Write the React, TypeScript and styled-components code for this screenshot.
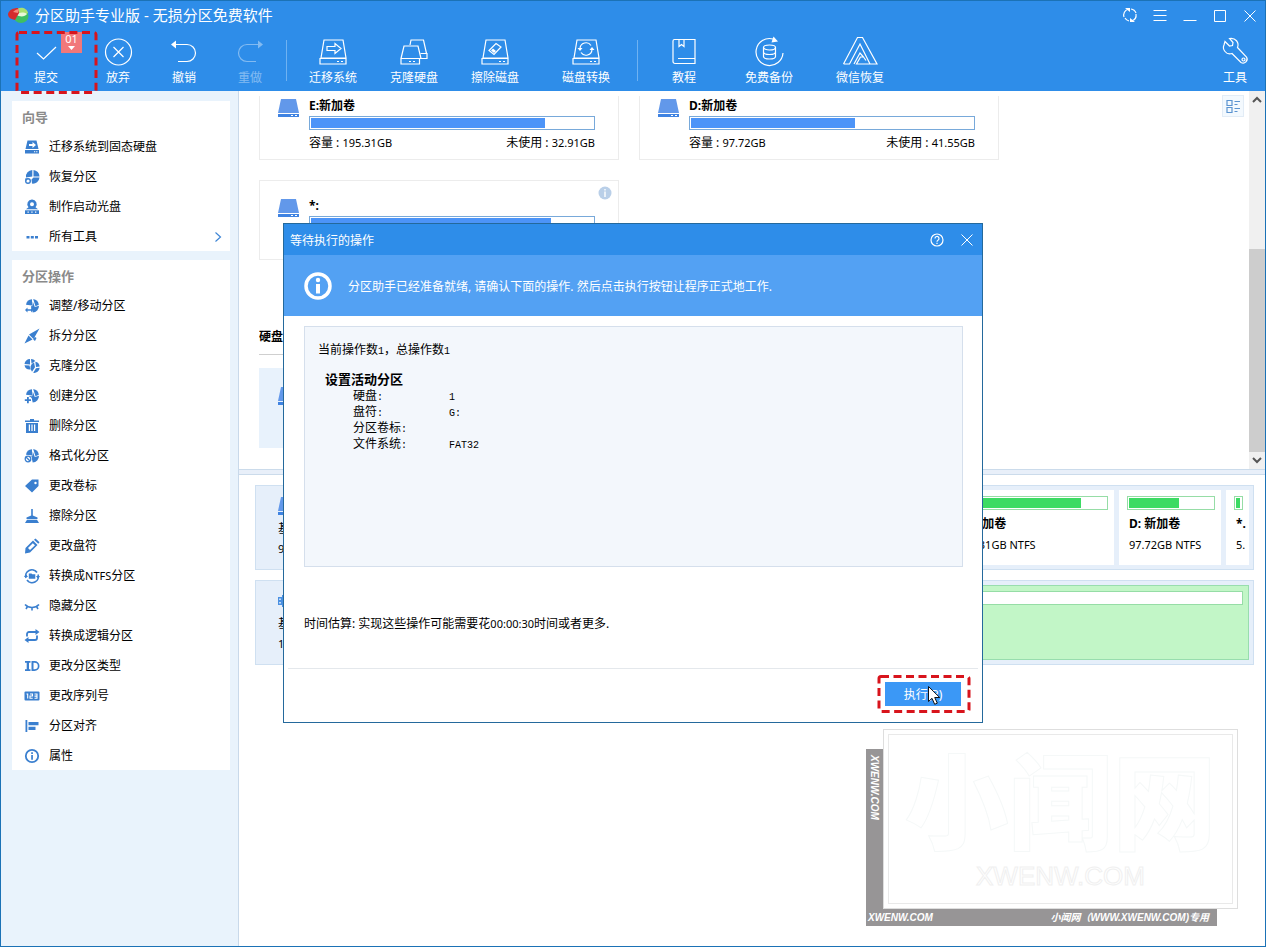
import React from "react";
import styled, { createGlobalStyle, css } from "styled-components";

const Global = createGlobalStyle`
  *, *::before, *::after { box-sizing: border-box; }
  body {
    margin: 0;
    background: #fff;
    color: #000;
    font-family: "Noto Sans", "Noto Sans CJK SC", sans-serif;
    font-size: 12px;
    line-height: 16px;
  }
  button { border: 0; padding: 0; background: none; color: inherit; font: inherit; }
  h1, h2, h3, p, ul, dl, dd { margin: 0; padding: 0; }
  ul { list-style: none; }
  svg { display: block; }
`;

const Window = styled.div`
  position: relative;
  display: flex;
  flex-direction: column;
  min-height: 100vh;
  border: 1px solid #1b72b6;
  overflow: hidden;
`;

const Num = styled.span`
  font-size: 11px;
`;

/* ---------- header ---------- */

const Header = styled.header`
  background: #2e8de9;
  color: #fff;
`;

const TitleBar = styled.div`
  display: flex;
  align-items: center;
  height: 30px;
  padding: 0 0 2px 7px;
  gap: 6px;
`;

const AppTitle = styled.h1`
  flex: 1;
  font-size: 15px;
  font-weight: 400;
  line-height: 20px;
  white-space: nowrap;
`;

const WindowButton = styled.button`
  display: grid;
  place-items: center;
  width: 30px;
  height: 28px;
`;

const WindowButtons = styled.div`
  display: flex;
`;

const ToolBar = styled.nav`
  display: flex;
  height: 60px;
  padding: 5px 5px 0 20px;
`;

const ToolGroup = styled.div<{ $columns: string }>`
  display: grid;
  grid-template-columns: ${(p) => p.$columns};
`;

const ToolButton = styled.button<{ $dim?: boolean }>`
  position: relative;
  display: flex;
  flex-direction: column;
  align-items: center;
  width: 50px;
  height: 52px;
  white-space: nowrap;
  opacity: ${(p) => (p.$dim ? 0.4 : 1)};
`;

const ToolIcon = styled.span`
  display: grid;
  place-items: center;
  height: 32px;
`;

const ToolLabel = styled.span`
  line-height: 20px;
`;

const ToolDivider = styled.span<{ $after: string }>`
  width: 1px;
  height: 41px;
  margin-top: 4px;
  margin-right: ${(p) => p.$after};
  background: #6fb2f2;
`;

const Spacer = styled.span`
  flex: 1;
`;

const Badge = styled.span`
  position: absolute;
  left: 40px;
  top: -4px;
  display: flex;
  flex-direction: column;
  align-items: center;
  width: 21px;
  height: 21px;
  background: #f1787a;
  font-size: 11px;
  line-height: 14px;
`;

const SubmitMark = styled.svg`
  position: absolute;
  left: 14px;
  top: 29px;
  z-index: 2;
`;

/* ---------- body ---------- */

const Body = styled.div`
  display: flex;
  flex: 1;
`;

const Sidebar = styled.aside`
  display: flex;
  flex-direction: column;
  flex: none;
  gap: 9px;
  width: 238px;
  padding: 10px 8px 0 11px;
  background: #e9f3fc;
  border-right: 1px solid #c9d9ea;
`;

const SideCard = styled.section`
  background: #fff;
`;

const SideTitle = styled.h2`
  height: 30px;
  padding-left: 10px;
  color: #8a8a8a;
  font-size: 13px;
  font-weight: 700;
  line-height: 32px;
`;

const SideItem = styled.button`
  display: flex;
  align-items: center;
  gap: 9px;
  width: 100%;
  height: 30px;
  padding: 2px 8px 0 12px;
  text-align: left;
  color: #000;
`;

const SideText = styled.span`
  flex: 1;
`;

const Main = styled.main`
  display: flex;
  flex-direction: column;
  flex: 1;
  min-width: 0;
`;

const VolumePane = styled.section`
  display: flex;
  flex: 9 1 0;
  min-height: 0;
`;

const VolumeView = styled.div`
  flex: 1;
  min-width: 0;
  padding: 5px 0 0 20px;
`;

const VolumeClip = styled.div`
  height: 100%;
  overflow: hidden;
`;

const VolumeScroll = styled.div`
  margin-top: -16px;
`;

const CardGrid = styled.div`
  display: grid;
  grid-template-columns: repeat(auto-fill, 360px);
  gap: 20px;
`;

const VolumeCard = styled.article<{ $selected?: boolean }>`
  display: flex;
  gap: 10px;
  height: 80px;
  padding: 18px 23px 0 18px;
  border: 1px solid ${(p) => (p.$selected ? "#e8f2fc" : "#ececec")};
  background: ${(p) => (p.$selected ? "#e8f2fc" : "#fff")};
  position: relative;
`;

const VolumeInfo = styled.div`
  flex: 1;
`;

const VolumeName = styled.h3`
  font-size: 12px;
  line-height: 14px;
`;

const Row = styled.div`
  display: flex;
  justify-content: space-between;
`;

const UsageBar = styled.div<{ $green?: boolean }>`
  height: 14px;
  padding: 1px;
  background: #fff;
  border: 1px solid ${(p) => (p.$green ? "#96dda6" : "#78a9da")};
`;

const UsageFill = styled.div<{ $green?: boolean }>`
  height: 100%;
  background: ${(p) => (p.$green ? "#3cdb63" : "#4c94f8")};
`;

const VolumeUsage = styled.div`
  padding: 3px 0 5px;
`;

const InfoDot = styled.span`
  position: absolute;
  right: 6px;
  top: 5px;
`;

const DiskHeading = styled.h2`
  max-width: 700px;
  margin-top: 68px;
  padding-bottom: 9px;
  margin-bottom: 13px;
  border-bottom: 1px solid #cfcfcf;
  font-size: 12px;
  line-height: 17px;
`;

const ViewButton = styled.button`
  display: grid;
  place-items: center;
  width: 22px;
  height: 22px;
  margin: 4px 5px 0 0;
  border: 1px solid #e2ecf6;
  background: #f3f9fe;
`;

const Scrollbar = styled.div`
  display: flex;
  flex-direction: column;
  width: 16px;
  background: #f0f0f0;
`;

const ScrollButton = styled.button`
  display: grid;
  place-items: center;
  height: 17px;
`;

const ScrollTrack = styled.div`
  display: flex;
  flex: 1;
  flex-direction: column;
  justify-content: flex-end;
`;

const ScrollThumb = styled.div`
  height: 59%;
  background: #cdcdcd;
`;

const Splitter = styled.div`
  height: 6px;
  background: #e8eff9;
  border: solid #cbdbeb;
  border-width: 1px 0;
`;

const DiskPane = styled.section`
  display: flex;
  flex-direction: column;
  flex: 11 1 0;
  gap: 10px;
  padding: 10px 11px 0 16px;
`;

const DiskRow = styled.div`
  display: flex;
  gap: 5px;
  height: 85px;
  padding: 4px;
  background: #e6effa;
  border: 1px solid #cfe0f1;
`;

const DiskLabel = styled.div`
  width: 100px;
  padding: 7px 0 0 18px;
  line-height: 20px;
`;

const DiskIconBox = styled.div`
  height: 22px;
`;

const Partition = styled.div<{ $width?: number; $filled?: boolean }>`
  ${(p) =>
    p.$width
      ? css`
          flex: none;
          width: ${p.$width}px;
        `
      : css`
          flex: 1;
        `}
  padding: 6px 6px 0 8px;
  overflow: hidden;
  white-space: nowrap;
  background: #fff;
  ${(p) =>
    p.$filled &&
    css`
      padding: 5px 5px 0;
      background: #c2f6c7;
      border: 1px solid #98ddae;
    `}
`;

const PartitionText = styled.div`
  padding: 3px 0 0 2px;
  line-height: 21px;
`;

/* ---------- dialog ---------- */

const Overlay = styled.div`
  position: absolute;
  inset: 0;
  display: grid;
  place-items: center;
  z-index: 3;
  padding-bottom: 1px;
`;

const Dialog = styled.div`
  position: relative;
  display: flex;
  flex-direction: column;
  width: 700px;
  height: 500px;
  border: 1px solid #24699c;
  background: #fff;
`;

const DialogTitle = styled.div`
  display: flex;
  align-items: center;
  height: 31px;
  padding-left: 6px;
  background: #2e8de9;
  color: #fff;
`;

const DialogName = styled.h2`
  flex: 1;
  padding-top: 2px;
  font-size: 12px;
  font-weight: 400;
`;

const Banner = styled.div`
  display: flex;
  align-items: center;
  gap: 16px;
  height: 61px;
  padding-left: 20px;
  background: #53a1f3;
  color: #fff;
`;

const BannerText = styled.p`
  padding-top: 2px;
`;

const Operations = styled.div`
  height: 241px;
  margin: 10px 19px 0 20px;
  padding: 15px 13px;
  border: 1px solid #d5dfec;
  background: #f3f7fc;
`;

const Mono = styled.span`
  font-family: "Liberation Mono", "Noto Sans CJK SC", monospace;
  font-size: 10px;
  line-height: 12px;
`;

const OpTitle = styled.h3`
  margin-top: 13px;
  padding: 0 0 1px 7px;
  font-size: 13px;
`;

const OpList = styled.dl`
  display: grid;
  grid-template-columns: 96px 1fr;
  grid-auto-rows: 16px;
  padding-left: 35px;
`;

const OpTerm = styled.dt`
  white-space: nowrap;
`;

const Estimate = styled.p`
  flex: 1;
  padding: 49px 20px 0;
`;

const DialogFooter = styled.div`
  display: flex;
  justify-content: flex-end;
  height: 54px;
  margin: 0 4px;
  padding: 13px 17px 0;
  border-top: 1px solid #e4e8ec;
`;

const RunButton = styled.button`
  position: relative;
  width: 76px;
  height: 24px;
  padding-top: 1px;
  background: #3b98f6;
  color: #fff;
`;

const RunMark = styled.svg`
  position: absolute;
  left: -9px;
  top: -9px;
`;

const Pointer = styled.svg`
  position: absolute;
  left: 42px;
  top: 3px;
`;

/* ---------- watermark ---------- */

const Watermark = styled.div`
  position: absolute;
  right: 27px;
  bottom: 20px;
  display: grid;
  grid-template-columns: 17px 334px 21px;
  grid-template-rows: 20px 160px 17px;
  color: #fff;
  font: italic 700 10px/17px "Liberation Sans", "Noto Sans CJK SC", sans-serif;
  white-space: nowrap;
`;

const MarkSide = styled.div`
  grid-column: 1;
  grid-row: 2 / 4;
  padding-top: 6px;
  background: #979596;
  writing-mode: vertical-rl;
`;

const MarkFoot = styled.div`
  grid-column: 1 / 3;
  grid-row: 3;
  display: flex;
  justify-content: space-between;
  padding: 0 8px 0 2px;
  background: #979596;
`;

const MarkBoard = styled.div`
  grid-column: 2 / 4;
  grid-row: 1 / 3;
  display: flex;
  flex-direction: column;
  align-items: center;
  padding-top: 24px;
  border: 1px solid #dedede;
  outline: 1px solid #e9e9e9;
  outline-offset: -6px;
  background: #fff;
  font-style: normal;
`;

const MarkName = styled.div`
  color: #fff;
  font-size: 104px;
  font-weight: 900;
  line-height: 104px;
  -webkit-text-stroke: 1px #f5f8f8;
`;

const MarkSite = styled.div`
  color: #fff;
  font-size: 26px;
  font-weight: 400;
  line-height: 36px;
  -webkit-text-stroke: 1px #f0f0f0;
`;

/* ---------- drawings ---------- */

const Line = ({ w = 32, h = w, children, sw = 1.2 }: any) => (
  <svg width={w} height={h} viewBox={`0 0 ${w} ${h}`} fill="none" stroke="currentColor" strokeWidth={sw}>
    {children}
  </svg>
);

const DiskLine = ({ children }: any) => (
  <Line>
    <path d="M7 4h19l3 18H4z M3 22.5h26v5.500H3z M20 25.500h2M24 25.500h2" />
    {children}
  </Line>
);

const toolIcons: Record<string, React.ReactNode> = {
  submit: <Line><path d="M7 17l6.500 6L26 11" /></Line>,
  discard: <Line><circle cx="16.500" cy="16" r="13" /><path d="M11.500 11l10 10M21.500 11l-10 10" /></Line>,
  undo: <Line><path d="M6 8.500h13a8.500 8.500 0 0 1 0 17H10" /><path d="M3 8.500l5-4v8z" fill="currentColor" stroke="none" /></Line>,
  redo: <Line><path d="M26 8.500H13a8.500 8.500 0 0 0 0 17h9" /><path d="M29 8.500l-5-4v8z" fill="currentColor" stroke="none" /></Line>,
  migrate: <DiskLine><path d="M10 10.500h8v-3l6 5-6 5v-3h-8z" /></DiskLine>,
  clone: (
    <Line>
      <path d="M6 10h14l3 12.500H3z M3 22.500h18.500v5.500H3z M11 25.500h2M15 25.500h2" />
      <path d="M12 9l1-5h12.500l3 13.500h-6M22.500 17.500H29v5h-6" />
    </Line>
  ),
  wipe: (
    <DiskLine>
      <path d="M17 7.500l5 3.500-7 7.500-5-4z" />
      <path d="M14 12.500l3 2.500-2 2-3-2.500z" fill="currentColor" stroke="none" />
    </DiskLine>
  ),
  convert: (
    <DiskLine>
      <path d="M10 12.500a6 6 0 0 1 11-3M22 13.500a6 6 0 0 1-11 3" />
      <path d="M7.500 12h5l-2.500 3zM19.500 14h5L22 11z" fill="currentColor" stroke="none" />
    </DiskLine>
  ),
  tutorial: (
    <Line>
      <path d="M6.500 3.500h20.500v24H7a2 2 0 0 1-2-2V5a1.500 1.500 0 0 1 1.500-1.500zM27 22.500H10M11 4v6.500l2.500-2 2.500 2V4" />
    </Line>
  ),
  backup: (
    <Line>
      <path d="M20 3A13.500 13.500 0 1 0 30 17" />
      <path d="M20.500 .500l4.500 5-6.500 1z" fill="currentColor" stroke="none" />
      <ellipse cx="16.500" cy="11.500" rx="6" ry="2.500" />
      <path d="M10.500 11.500v9c0 3.300 12 3.300 12 0v-9M10.500 16c0 3.300 12 3.300 12 0" />
    </Line>
  ),
  wechat: (
    <Line w={36} h={32}>
      <path d="M1.500 28L15.500 1.500h5L35 28H14.500l4-7h3l2.500 3.500M1.500 28h6L18 8l10 20M12 28l6-11 3.500 4" />
    </Line>
  ),
  tools: (
    <Line>
      <path d="M6 5.500l4.500 4.500 3-.500.500-3-3.500-4c6-1 10 4 8 9l9 9.500a4 4 0 0 1-5.500 5.500L13 17.500C7 19.500 3 13 5 9z" />
      <circle cx="24.500" cy="23.500" r="1.500" />
    </Line>
  ),
};

const Solid = ({ children }: any) => (
  <svg width="16" height="16" viewBox="0 0 16 16" fill="#3a7fcf">
    {children}
  </svg>
);

const Pie = ({ children }: any) => (
  <Solid>
    <path d="M8 1.200v6.300L2 6.800A6.500 6.500 0 0 1 8 1.200z" />
    <path d="M9.200 1a6.700 6.700 0 0 1 5.600 5.800L11.500 8.200z" />
    <path d="M8.800 3.500l2 5.500 4.200-1.200a6.600 6.600 0 0 1-6.300 6.700l-1-4.500-3-2 3.500.3z" />
    {children}
  </Solid>
);

const stroke = { fill: "none", stroke: "#3a7fcf", strokeWidth: 1.8 };

const sideIcons: Record<string, React.ReactNode> = {
  migrate: (
    <Solid>
      <path d="M3.500 1.500h9L14.500 10h-13z M1 11h14v3.500H1z" />
      <path d="M5 5h3.500V3L12 6 8.500 9V7H5z M10 12.300h1.200v1H10zM12.200 12.300h1.200v1h-1.200z" fill="#fff" />
    </Solid>
  ),
  recover: (
    <Solid>
      <path d="M8.300 1v6.400L2 8.500A6.600 6.600 0 0 1 8.300 1zM9.500 1a6.600 6.600 0 0 1 6 6.400h-6zM9.500 8.600h6a6.600 6.600 0 0 1-7.500 6l-.500-4z" />
      <circle cx="4" cy="12" r="2.300" {...stroke} strokeWidth="1.400" />
      <path d="M1 9.500h3l-2 2.500z" />
    </Solid>
  ),
  boot: (
    <Solid>
      <path fillRule="evenodd" d="M8 0.500a4.600 4.600 0 0 1 3.500 7.700L14 10.300H2l2.500-2.100A4.600 4.600 0 0 1 8 .500zM8 3.200a2 2 0 1 0 0 4 2 2 0 0 0 0-4z" />
      <path d="M1 11.300h14V15H1z" />
      <path d="M3.500 12.600h1.300v1.200H3.500zM7.300 12.600h1.300v1.200H7.300zM11 12.600h1.300v1.200H11z" fill="#fff" />
    </Solid>
  ),
  more: <Solid><path d="M2.500 7h3v2.500h-3zM6.800 7h3v2.500h-3zM11 7h3v2.500h-3z" /></Solid>,
  resize: (
    <Pie>
      <path d="M0 8h7v7H0z" fill="#fff" />
      <path d="M1 12l2.500-2.500v1.800h3.500V9.500L9 12l-2 2.500v-1.800H3.500v1.800z" />
    </Pie>
  ),
  split: <Solid><path d="M15.500 .500L9.500 11 5 6.500zM4.500 7.500L8.500 11.500 5.500 13 0.500 15.500l2.500-5zM11 9l1.500 1-1.500 3-1.800-1.500z" /></Solid>,
  clone: (
    <Solid>
      <path d="M6 1v5.500L.500 6A5.500 5.500 0 0 1 6 1zM7 1a5.500 5.500 0 0 1 4.300 2L7.500 5.500zM.5 7.200l5 .300 1 4A5.500 5.500 0 0 1 .5 7.200z" />
      <path d="M10 4.200l1 5-3 4.500A6 6 0 0 1 10 4.200zM11.300 3.700a5.500 5.500 0 0 1 4.400 4.800l-3.700.500zM12 10.300l3.700-.500a5.500 5.500 0 0 1-6.500 5z" />
    </Solid>
  ),
  create: (
    <Pie>
      <path d="M0 9h6.500v6.500H0z" fill="#fff" />
      <path d="M3 9h1.800v2.200H7V13H4.800v2.300H3V13H.800v-1.800H3z" />
    </Pie>
  ),
  remove: (
    <Solid>
      <path d="M6 1h4v1.500h5V4H1V2.500h5zM2 5h12v10H2z" />
      <path d="M4.800 6.500h1.200v6.500H4.800zM7.400 6.500h1.200v6.500H7.400zM10 6.500h1.200v6.500H10z" fill="#fff" />
    </Solid>
  ),
  format: (
    <Pie>
      <circle cx="4" cy="11" r="4" fill="#fff" />
      <circle cx="4" cy="11" r="2.800" {...stroke} strokeWidth="1.300" />
      <path d="M2 9l4 4" {...stroke} strokeWidth="1.300" />
    </Pie>
  ),
  tag: <Solid><path fillRule="evenodd" d="M14.500 1.500v6.500L8 14.500 1 8l7-6.500zM11.500 3.800a1.200 1.200 0 1 0 0 2.400 1.200 1.200 0 0 0 0-2.400z" /></Solid>,
  broom: <Solid><path d="M7.200 1h1.600v6.500l4.700 2V11H2.500V9.500l4.700-2zM3 11.800h10L15 15H1z" /></Solid>,
  pencil: (
    <Solid>
      <path fillRule="evenodd" d="M9 2.500l4.500 4.500-7.500 7.500-5 1 .500-5.500zM8.800 5.200L4 10l2 2 5-4.800z" />
      <path d="M10 1.700L11.500 .500l4 3.700-1.200 1.600z" />
    </Solid>
  ),
  ntfs: (
    <Solid>
      <path d="M2 10A6.200 6.200 0 0 1 13 4.500M14 6.500A6.200 6.200 0 0 1 3 12" {...stroke} strokeWidth="1.600" />
      <path d="M0 9h4l-2-3zM12 8h4l-2 3zM4.800 5.500h2.700l.8.800h3v4.500H4.800z" />
    </Solid>
  ),
  hide: <Solid><path d="M1 6.500c4 4 10 4 14 0M3.500 8.500L2 11M12.500 8.500L14 11M8 9.500v3" {...stroke} strokeWidth="1.600" /></Solid>,
  logical: (
    <Solid>
      <path d="M3 8.500V6a2 2 0 0 1 2-2h7M13 7.500V10a2 2 0 0 1-2 2H4" {...stroke} />
      <path d="M11.500 1l4 3-4 3zM4.500 9v6l-4-3z" />
    </Solid>
  ),
  ident: <Solid><path fillRule="evenodd" d="M1 3h5.500v1.700H5v6.600h1.500V13H1v-1.700h1.700V4.700H1zM7.500 3h3a5 5 0 0 1 0 10h-3zM9.500 4.700v6.600h1a3.300 3.300 0 0 0 0-6.600z" /></Solid>,
  serial: (
    <Solid>
      <rect x="0.500" y="3.500" width="15" height="9" rx="1" />
      <path d="M2.500 6h1.200v4.500M6 6h2.500v2H6v2.200h2.700M10.500 6H13v4.200h-2.500M10.500 8.100H13" fill="none" stroke="#fff" strokeWidth="1.100" />
    </Solid>
  ),
  align: <Solid><path d="M1.500 2h1.800v12H1.500zM4.500 4h10v3.200h-10zM4.500 8.800h7V12h-7z" /></Solid>,
  info: (
    <Solid>
      <circle cx="8" cy="8" r="6.200" {...stroke} />
      <path d="M7.200 4.300h1.700v1.600H7.200zM7.200 7h1.700v4.700H7.200z" />
    </Solid>
  ),
};

const DiskGlyph = () => (
  <svg width="21" height="18" viewBox="0 0 21 18">
    <path d="M3 0h15l3 14H0z" fill="#6298ea" />
    <path d="M0 15h21v3H0z" fill="#3f83e2" />
    <path d="M13 16h2v1h-2zM17 16h2v1h-2z" fill="#fff" />
  </svg>
);

const UsbGlyph = () => (
  <svg width="21" height="16" viewBox="0 0 21 16" fill="#4a90e2">
    <path fillRule="evenodd" d="M0 5h4v8H0zM1.200 6.500v1.500h1.600V6.500zM1.200 10v1.500h1.600V10z" />
    <path d="M4 3h17v12H4z" />
  </svg>
);

const Chevron = ({ up }: { up?: boolean }) => (
  <Line w={10} h={8} sw={2}>
    <path d={up ? "M1 6l4-4 4 4" : "M1 2l4 4 4-4"} stroke="#555" />
  </Line>
);

/* ---------- data ---------- */

const tools1 = [["submit", "提交"], ["discard", "放弃"], ["undo", "撤销"], ["redo", "重做"]];
const tools2 = [["migrate", "迁移系统"], ["clone", "克隆硬盘"], ["wipe", "擦除磁盘"], ["convert", "磁盘转换"]];
const tools3 = [["tutorial", "教程"], ["backup", "免费备份"], ["wechat", "微信恢复"]];

const wizard: [string, React.ReactNode][] = [
  ["migrate", "迁移系统到固态硬盘"],
  ["recover", "恢复分区"],
  ["boot", "制作启动光盘"],
  ["more", "所有工具"],
];

const operations: [string, React.ReactNode][] = [
  ["resize", "调整/移动分区"],
  ["split", "拆分分区"],
  ["clone", "克隆分区"],
  ["create", "创建分区"],
  ["remove", "删除分区"],
  ["format", "格式化分区"],
  ["tag", "更改卷标"],
  ["broom", "擦除分区"],
  ["pencil", "更改盘符"],
  ["ntfs", <>转换成<Num>NTFS</Num>分区</>],
  ["hide", "隐藏分区"],
  ["logical", "转换成逻辑分区"],
  ["ident", "更改分区类型"],
  ["serial", "更改序列号"],
  ["align", "分区对齐"],
  ["info", "属性"],
];

const volumes = [
  { name: "E:新加卷", used: 83, size: "195.31GB", free: "32.91GB", info: false },
  { name: "D:新加卷", used: 58, size: "97.72GB", free: "41.55GB", info: false },
  { name: "*:", used: 85, size: "", free: "", info: true },
];

const partitions = [
  { name: "E: 新加卷", text: "195.31GB NTFS", used: 83, width: 167 },
  { name: "D: 新加卷", text: "97.72GB NTFS", used: 60, width: 102 },
  { name: "*.", text: "5.", used: 85, width: 23 },
];

const Tool = ({ id, label }: { id: string; label: string }) => (
  <ToolButton $dim={id === "redo"} disabled={id === "redo"}>
    <ToolIcon>{toolIcons[id]}</ToolIcon>
    <ToolLabel>{label}</ToolLabel>
    {id === "submit" && (
      <Badge>
        01
        <svg width="7" height="4" viewBox="0 0 7 4"><path d="M0 0h7L3.500 4z" fill="#fff" /></svg>
      </Badge>
    )}
  </ToolButton>
);

const SideList = ({ items }: { items: [string, React.ReactNode][] }) => (
  <ul>
    {items.map(([id, label]) => (
      <li key={id}>
        <SideItem>
          {sideIcons[id]}
          <SideText>{label}</SideText>
          {id === "more" && (
            <Line w={8} h={12}><path d="M1.500 1.500L6.500 6l-5 4.500" stroke="#3f86d6" /></Line>
          )}
        </SideItem>
      </li>
    ))}
  </ul>
);

export default function App() {
  return (
    <Window lang="zh-CN">
      <Global />
      <Header>
        <TitleBar>
          <svg width="21" height="18" viewBox="0 0 21 18">
            <ellipse cx="13" cy="10" rx="7.500" ry="7" fill="#3fbf62" />
            <path d="M8 4c4-4 11-2 12 3-4 3-8 1-12-3z" fill="#a8e070" />
            <path d="M8 9c3-3 8-3 11-1-2 3-7 3-11 1z" fill="#e9f7d8" />
            <path d="M0 8c1-4 5-6 10-6l1 5-4 7C2 13 0 11 0 8z" fill="#d42c2c" />
            <path d="M5 6c2-2 4-3 6-3l-1 4z" fill="#f58a7c" />
          </svg>
          <AppTitle>分区助手专业版 - 无损分区免费软件</AppTitle>
          <WindowButtons>
            <WindowButton aria-label="刷新">
              <Line w={16}>
                <path d="M2 10A6.200 6.200 0 0 1 6 2.200M9 2a6.200 6.200 0 0 1 5 4M14 7a6.200 6.200 0 0 1-4 6.800M7 14a6.200 6.200 0 0 1-4-3" />
                <path d="M3 1h5v4zM13 15H8v-4z" fill="currentColor" stroke="none" />
              </Line>
            </WindowButton>
            <WindowButton aria-label="菜单"><Line w={14} sw={1}><path d="M.5 2.500h13M.5 7.500h13M.5 12.500h13" /></Line></WindowButton>
            <WindowButton aria-label="最小化"><Line w={14} sw={1}><path d="M.5 12.500h13" /></Line></WindowButton>
            <WindowButton aria-label="最大化"><Line w={14} sw={1}><path d="M1.500 2.500h11v11h-11z" /></Line></WindowButton>
            <WindowButton aria-label="关闭"><Line w={14} sw={1}><path d="M1.500 2.500l11 11M12.500 2.500l-11 11" /></Line></WindowButton>
          </WindowButtons>
        </TitleBar>
        <ToolBar>
          <ToolGroup $columns="72px 66px 66px 61px">
            {tools1.map(([id, label]) => <Tool key={id} id={id} label={label} />)}
          </ToolGroup>
          <ToolDivider $after="21px" />
          <ToolGroup $columns="81px 81px 91px 76px">
            {tools2.map(([id, label]) => <Tool key={id} id={id} label={label} />)}
          </ToolGroup>
          <ToolDivider $after="21px" />
          <ToolGroup $columns="85px 91px 50px">
            {tools3.map(([id, label]) => <Tool key={id} id={id} label={label} />)}
          </ToolGroup>
          <Spacer />
          <Tool id="tools" label="工具" />
        </ToolBar>
      </Header>
      <SubmitMark width="83" height="65" viewBox="0 0 83 65">
        <rect x="2" y="2.500" width="79" height="60" rx="2" fill="none" stroke="#d8141c" strokeWidth="3" strokeDasharray="8 4.600" />
      </SubmitMark>

      <Body>
        <Sidebar>
          <SideCard>
            <SideTitle>向导</SideTitle>
            <SideList items={wizard} />
          </SideCard>
          <SideCard>
            <SideTitle>分区操作</SideTitle>
            <SideList items={operations} />
          </SideCard>
        </Sidebar>

        <Main>
          <VolumePane>
            <VolumeView>
              <VolumeClip>
                <VolumeScroll>
                  <CardGrid>
                    {volumes.map((v) => (
                      <VolumeCard key={v.name}>
                        <DiskGlyph />
                        <VolumeInfo>
                          <VolumeName>{v.name}</VolumeName>
                          <VolumeUsage>
                            <UsageBar><UsageFill style={{ width: `${v.used}%` }} /></UsageBar>
                          </VolumeUsage>
                          {v.size && (
                            <Row>
                              <span>容量 : <Num>{v.size}</Num></span>
                              <span>未使用 : <Num>{v.free}</Num></span>
                            </Row>
                          )}
                        </VolumeInfo>
                        {v.info && (
                          <InfoDot>
                            <svg width="14" height="14" viewBox="0 0 14 14">
                              <circle cx="7" cy="7" r="6.500" fill="#b9cfe8" />
                              <path d="M6.300 3h1.400v1.500H6.300zM6.300 5.500h1.400V11H6.300z" fill="#fff" />
                            </svg>
                          </InfoDot>
                        )}
                      </VolumeCard>
                    ))}
                  </CardGrid>
                  <DiskHeading>硬盘</DiskHeading>
                  <CardGrid>
                    <VolumeCard $selected><DiskGlyph /></VolumeCard>
                  </CardGrid>
                </VolumeScroll>
              </VolumeClip>
            </VolumeView>
            <ViewButton aria-label="视图">
              <Line w={14} sw={1.200}>
                <path d="M1 1.500h5v5H1zM1 8.500h5v5H1zM8.500 2.500H14M8.500 5.500h3M8.500 9.500H14M8.500 12.500h3" stroke="#5b93d0" />
              </Line>
            </ViewButton>
            <Scrollbar>
              <ScrollButton aria-label="向上"><Chevron up /></ScrollButton>
              <ScrollTrack><ScrollThumb /></ScrollTrack>
              <ScrollButton aria-label="向下"><Chevron /></ScrollButton>
            </Scrollbar>
          </VolumePane>
          <Splitter />
          <DiskPane>
            <DiskRow>
              <DiskLabel>
                <DiskIconBox><DiskGlyph /></DiskIconBox>
                <div>基本</div>
                <Num>931.51GB</Num>
              </DiskLabel>
              <Partition />
              {partitions.map((p) => (
                <Partition key={p.name} $width={p.width}>
                  <UsageBar $green><UsageFill $green style={{ width: `${p.used}%` }} /></UsageBar>
                  <PartitionText>
                    <b>{p.name}</b>
                    <br />
                    <Num>{p.text}</Num>
                  </PartitionText>
                </Partition>
              ))}
            </DiskRow>
            <DiskRow>
              <DiskLabel>
                <DiskIconBox><UsbGlyph /></DiskIconBox>
                <div>基本</div>
                <Num>14.65GB</Num>
              </DiskLabel>
              <Partition $filled>
                <UsageBar $green />
              </Partition>
            </DiskRow>
          </DiskPane>
        </Main>
      </Body>

      <Watermark>
        <MarkSide>XWENW.COM</MarkSide>
        <MarkFoot>
          <span>XWENW.COM</span>
          <span>小闻网（WWW.XWENW.COM)专用</span>
        </MarkFoot>
        <MarkBoard>
          <MarkName>小闻网</MarkName>
          <MarkSite>XWENW.COM</MarkSite>
        </MarkBoard>
      </Watermark>

      <Overlay>
        <Dialog role="dialog" aria-labelledby="pending-title">
          <DialogTitle>
            <DialogName id="pending-title">等待执行的操作</DialogName>
            <WindowButton aria-label="帮助">
              <Line w={14}>
                <circle cx="7" cy="7" r="6" />
                <path d="M5 5.500a2 2 0 1 1 3 1.700c-.7.400-1 .800-1 1.500M7 9.800v1.200" />
              </Line>
            </WindowButton>
            <WindowButton aria-label="关闭">
              <Line w={14} sw={1}><path d="M1.500 1.500l11 11M12.500 1.500l-11 11" /></Line>
            </WindowButton>
          </DialogTitle>
          <Banner>
            <svg width="28" height="28" viewBox="0 0 28 28" fill="#fff">
              <circle cx="14" cy="14" r="12" fill="none" stroke="#fff" strokeWidth="3.500" />
              <circle cx="14" cy="8" r="2.200" />
              <path d="M12 12h4v9.500h-4z" />
            </svg>
            <BannerText>分区助手已经准备就绪, 请确认下面的操作. 然后点击执行按钮让程序正式地工作.</BannerText>
          </Banner>
          <Operations>
            <p>当前操作数<Mono>1</Mono>，总操作数<Mono>1</Mono></p>
            <OpTitle>设置活动分区</OpTitle>
            <OpList>
              <OpTerm>硬盘<Mono>:</Mono></OpTerm><dd><Mono>1</Mono></dd>
              <OpTerm>盘符<Mono>:</Mono></OpTerm><dd><Mono>G:</Mono></dd>
              <OpTerm>分区卷标<Mono>:</Mono></OpTerm><dd />
              <OpTerm>文件系统<Mono>:</Mono></OpTerm><dd><Mono>FAT32</Mono></dd>
            </OpList>
          </Operations>
          <Estimate>时间估算: 实现这些操作可能需要花<Num>00:00:30</Num>时间或者更多.</Estimate>
          <DialogFooter>
            <RunButton>
              执行(P)
              <RunMark width="96" height="42" viewBox="0 0 96 42">
                <rect x="3" y="3.500" width="90" height="35" rx="2" fill="none" stroke="#d8141c" strokeWidth="3" strokeDasharray="8 4.500" />
              </RunMark>
              <Pointer width="15" height="21" viewBox="0 0 15 21">
                <path d="M1.500 1.500v15l3.500-3.200 2.700 6 2.600-1.200-2.600-5.600h5z" fill="#fff" stroke="#111" />
              </Pointer>
            </RunButton>
          </DialogFooter>
        </Dialog>
      </Overlay>
    </Window>
  );
}
